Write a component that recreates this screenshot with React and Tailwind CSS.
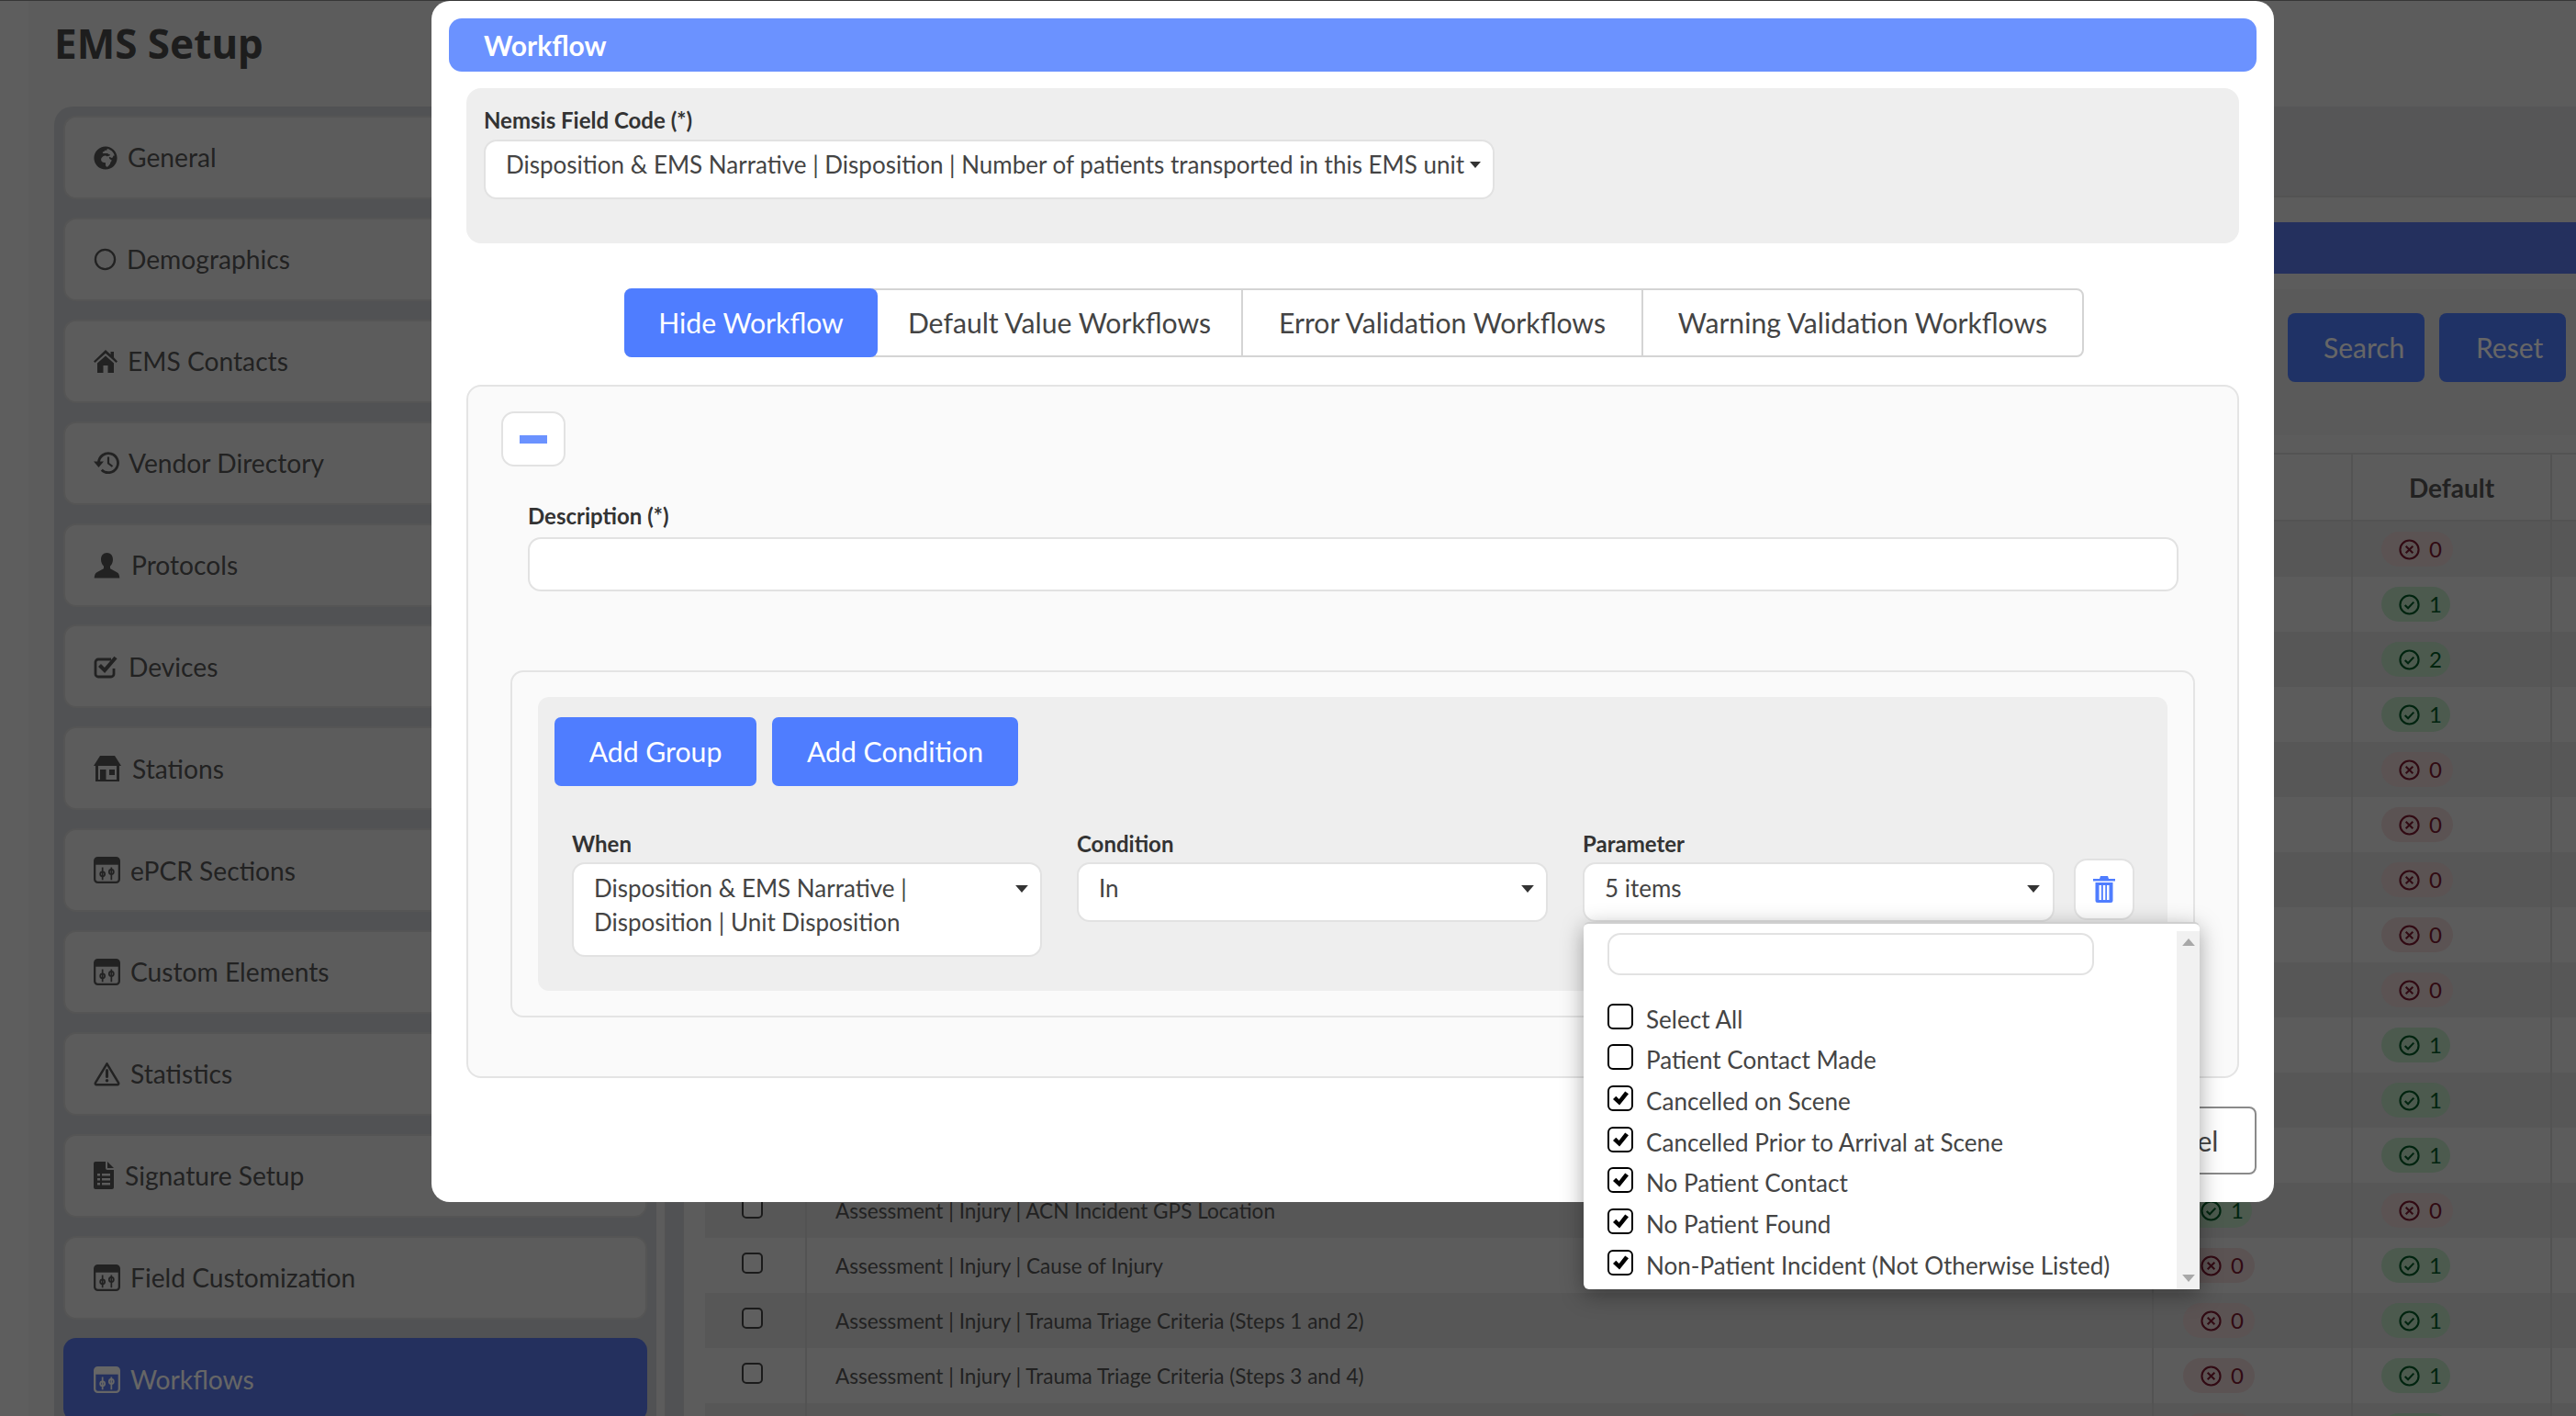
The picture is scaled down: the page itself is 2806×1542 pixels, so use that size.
import React from 'react';
import { FaGlobeAfrica } from 'react-icons/fa';

const HomeIcon = () => (
  <svg viewBox="0 0 26 26" className="w-[26px] h-[26px]" fill="currentColor">
    <path d="M13 1 18.500 6V3H22v6.300L26 13.500l-1.500 1.600L13 4.800 1.500 15.100 0 13.500z" />
    <path d="M4 15.500 13 7.500l9 8V26h-6.500v-8h-5v8H4z" />
  </svg>
);
const HistoryIcon = () => (
  <svg viewBox="0 0 28 26" className="w-[28px] h-[26px]" fill="none" stroke="currentColor">
    <path d="M5.500 12.500a10.500 10.500 0 1 1 3.200 8.200" strokeWidth="2.800" />
    <path d="M0 11.500h11l-5.500 6.500z" fill="currentColor" stroke="none" />
    <path d="M16 6.500v7l4.500 3.500" strokeWidth="2.200" />
  </svg>
);
const CheckSquareIcon = () => (
  <svg viewBox="0 0 27 26" className="w-[27px] h-[26px]" fill="none" stroke="currentColor">
    <path d="M22 15v6a3 3 0 0 1-3 3H5a3 3 0 0 1-3-3V8a3 3 0 0 1 3-3h14" strokeWidth="2.800" />
    <path d="M6.500 11.500 12 17 24 3" strokeWidth="4.200" />
  </svg>
);
const UserIcon = () => (
  <svg viewBox="0 0 29 29" className="w-[29px] h-[29px]" fill="currentColor">
    <path d="M14.5 1c4 0 6.5 3 6.5 7.2 0 3-1.3 5.800-3 7.400v2.100c0 1 6 3 8.500 5.400 1.200 1.200 1.700 3.400 1.800 5.400H.7c.1-2 .6-4.200 1.800-5.400C5 20.700 11 18.700 11 17.700v-2.100C9.300 14 8 11.200 8 8.200 8 4 10.500 1 14.500 1z" />
  </svg>
);
const StationIcon = () => (
  <svg viewBox="0 0 30 30" className="w-[30px] h-[30px]" fill="currentColor">
    <path d="M7 1h16l7 11H0z" />
    <path d="M2 10h3v17h20V10h3v19H2z" />
    <path d="M7 16h6.500v12H7zM17 16h6v6h-6z" />
  </svg>
);
const SlidersIcon = () => (
  <svg viewBox="0 0 30 30" className="w-[29px] h-[29px]" fill="none" stroke="currentColor">
    <rect x="1.200" y="1.200" width="27.600" height="27.600" rx="3.500" strokeWidth="2.400" />
    <path d="M2 2h26v7H2z" fill="currentColor" stroke="none" />
    <path d="M10 12v14M20 12v14" strokeWidth="1.800" />
    <circle cx="10" cy="19.500" r="2.600" strokeWidth="1.800" />
    <circle cx="20" cy="17" r="2.600" strokeWidth="1.800" />
  </svg>
);
const TriangleIcon = () => (
  <svg viewBox="0 0 30 28" className="w-[29px] h-[27px]" fill="none" stroke="currentColor">
    <path d="M15 2.500 28 24a1.500 1.500 0 0 1-1.300 2.300H3.300A1.500 1.500 0 0 1 2 24z" strokeWidth="2.600" strokeLinejoin="round" />
    <path d="M15 10v7" strokeWidth="3.200" strokeLinecap="round" />
    <circle cx="15" cy="21.500" r="1.800" fill="currentColor" stroke="none" />
  </svg>
);
const FileIcon = () => (
  <svg viewBox="0 0 22 30" className="w-[22px] h-[30px]" fill="currentColor">
    <path fillRule="evenodd" d="M2 0h11v7a2 2 0 0 0 2 2h7v19a2 2 0 0 1-2 2H2a2 2 0 0 1-2-2V2a2 2 0 0 1 2-2zM15 0l7 7h-7zM4 13v2.500h3V13zM9 13v2.500h9V13zM4 18v2.500h3V18zM9 18v2.500h9V18zM4 23v2.500h3V23zM9 23v2.500h9V23z" />
  </svg>
);
const CircleIcon = () => (
  <svg viewBox="0 0 26 26" className="w-[25px] h-[25px]" fill="none" stroke="currentColor" strokeWidth="2.400">
    <circle cx="13" cy="13" r="11" />
  </svg>
);
const Caret = ({ className }) => (
  <svg viewBox="0 0 12 7" className={className} fill="currentColor"><path d="M0 0h12L6 7z" /></svg>
);
const Check = () => (
  <svg viewBox="0 0 18 16" className="w-[17px] h-[16px]" fill="#000"><path d="M0 9 3.500 5.500 7 9 14 0 18 3 7.500 16z" /></svg>
);
const Trash = () => (
  <svg viewBox="0 0 24 29" className="w-[24px] h-[29px]" fill="#4f7dff">
    <path d="M8 0h8l1 3h7v2.500H0V3h7z" />
    <path fillRule="evenodd" d="M2.500 7h19v19.500a2.500 2.500 0 0 1-2.500 2.500H5a2.500 2.500 0 0 1-2.500-2.500zM6.500 10v16h2.500V10zM10.800 10v16h2.500V10zM15 10v16h2.500V10z" />
  </svg>
);

const navItems = [
  ['General', <FaGlobeAfrica className="w-[26px] h-[26px]" />, 'gap-[11px]'],
  ['Demographics', <CircleIcon />, 'gap-[11px]'],
  ['EMS Contacts', <HomeIcon />, 'gap-[11px]'],
  ['Vendor Directory', <HistoryIcon />, 'gap-[10px]'],
  ['Protocols', <UserIcon />, 'gap-[12px]'],
  ['Devices', <CheckSquareIcon />, 'gap-[11px]'],
  ['Stations', <StationIcon />, 'gap-[12px]'],
  ['ePCR Sections', <SlidersIcon />, 'gap-[11px]'],
  ['Custom Elements', <SlidersIcon />, 'gap-[11px]'],
  ['Statistics', <TriangleIcon />, 'gap-[11px]'],
  ['Signature Setup', <FileIcon />, 'gap-[12px]'],
  ['Field Customization', <SlidersIcon />, 'gap-[11px]'],
];

const Badge = ({ ok, n }) => (
  <span className={`inline-flex items-center h-[38px] rounded-full pl-[19px] gap-[10px] text-[24px] ${ok ? 'w-[75px] bg-[#bde0c4] text-[#005a26]' : 'w-[78px] bg-[#e4cfcf] text-[#7a1a30]'}`}>
    <svg viewBox="0 0 24 24" className="w-[23px] h-[23px] shrink-0" fill="none" stroke="currentColor" strokeWidth="2.200">
      <circle cx="12" cy="12" r="10.500" />
      {ok ? <path d="m7 12.500 3.500 3.500L17 9" /> : <path d="m8 8 8 8M16 8l-8 8" />}
    </svg>
    {n}
  </span>
);

const rows = [
  ['', 0, 0], ['', 1, 1], ['', 1, 2], ['', 1, 1], ['', 0, 0], ['', 0, 0], ['', 0, 0], ['', 0, 0], ['', 0, 0],
  ['', 0, 1], ['', 0, 1], ['', 0, 1],
  ['Assessment | Injury | ACN Incident GPS Location', 1, 0],
  ['Assessment | Injury | Cause of Injury', 0, 1],
  ['Assessment | Injury | Trauma Triage Criteria (Steps 1 and 2)', 0, 1],
  ['Assessment | Injury | Trauma Triage Criteria (Steps 3 and 4)', 0, 1],
  ['', 0, 1],
];

const options = [
  ['Select All', false],
  ['Patient Contact Made', false],
  ['Cancelled on Scene', true],
  ['Cancelled Prior to Arrival at Scene', true],
  ['No Patient Contact', true],
  ['No Patient Found', true],
  ['Non-Patient Incident (Not Otherwise Listed)', true],
];

const fieldBox = 'bg-white border-2 border-[#e2e2e2] rounded-[14px]';

export default function App() {
  return (
    <div className="relative w-[2806px] h-[1542px] overflow-hidden bg-[#e6e6e6] font-['Lato',sans-serif]">
      {/* page behind the dialog */}
      <div className="h-[1px] bg-[#888]" />
      <div className="flex h-[1541px]">
        <div className="w-[725px] shrink-0 flex flex-col border-r border-[#cfcfcf] border-l-[31px] border-l-[#ebebeb]">
          <div className="h-[115px] shrink-0 pl-[28px] pt-[16px]">
            <h1 className="text-[44px] leading-[60px] font-bold text-[#4a4a4a] font-['Noto_Sans',sans-serif]">EMS Setup</h1>
          </div>
          <div className="ml-[28px] w-[656px] flex-1 bg-[#cbced1] rounded-t-[20px] p-[10px] flex flex-col gap-[19.9px] overflow-hidden">
            {navItems.map(([label, icon, gap]) => (
              <div key={label} className={`h-[91px] shrink-0 flex items-center pl-[31px] ${gap} rounded-[14px] bg-[#e7e7e7] border-2 border-[#d4d4d4] text-[#555] text-[28.2px]`}>
                {icon}
                <span>{label}</span>
              </div>
            ))}
            <div className="h-[91px] shrink-0 flex items-center pl-[33px] gap-[11px] rounded-[14px] bg-[#5a78eb] text-[#fff] text-[28.2px]">
              <SlidersIcon />
              <span>Workflows</span>
            </div>
          </div>
        </div>
        <div className="w-[19px] shrink-0 bg-[#cbced1]" />
        <div className="flex-1 min-w-0 flex flex-col overflow-hidden border-l border-[#d0d0d0]">
          <div className="h-[115px] shrink-0 bg-[#e6e6e6]" />
          <div className="h-[99px] shrink-0 bg-[#d6d8da] border-b-2 border-[#cfcfcf]" />
          <div className="h-[27px] shrink-0" />
          <div className="h-[56px] shrink-0 bg-[#5a78eb]" />
          <div className="h-[17px] shrink-0" />
          <div className="h-[159px] shrink-0 bg-[#e0e0e0] flex items-start justify-end gap-[16px] pr-[11px] pt-[26px]">
            <button className="w-[149px] h-[75px] rounded-[8px] bg-[#4f7dff] text-white text-[30px] pl-[39px] text-left">Search</button>
            <button className="w-[138px] h-[75px] rounded-[8px] bg-[#4f7dff] text-white text-[30px] pl-[40px] text-left">Reset</button>
          </div>
          <div className="h-[19px] shrink-0" />
          <div className="pl-[23px] w-[2085px] text-[#555]">
            <div className="flex h-[75px] border-y-2 border-[#cfcfcf] items-center text-[28px] font-bold">
              <div className="w-[109px] shrink-0" />
              <div className="w-[1467px] shrink-0" />
              <div className="w-[217px] shrink-0 h-full border-l-2 border-[#cfcfcf]" />
              <div className="w-[219px] shrink-0 h-full border-x-2 border-[#cfcfcf] flex items-center justify-center">Default</div>
            </div>
            {rows.map(([name, second, third], i) => (
              <div key={i} className={`flex h-[60px] items-center text-[22.6px] ${i % 2 === 0 ? 'bg-[#d9d9d9]' : 'bg-[#e6e6e6]'}`}>
                <div className="w-[109px] shrink-0 h-full flex items-center pl-[40px]">
                  <span className="w-[23px] h-[23px] rounded-[5px] border-2 border-[#444] bg-[#eee] mb-[5px]" />
                </div>
                <div className="w-[1467px] shrink-0 h-full flex items-center pl-[31px] pt-[1px] border-l-2 border-[#cfcfcf]">{name}</div>
                <div className="w-[217px] shrink-0 h-full flex items-center pl-[32px] border-l-2 border-[#cfcfcf]">
                  {i > 8 && <Badge ok={second === 1} n={second} />}
                </div>
                <div className="w-[219px] shrink-0 h-full flex items-center pl-[31px] border-x-2 border-[#cfcfcf]">
                  <Badge ok={third > 0} n={third} />
                </div>
              </div>
            ))}
          </div>
        </div>
      </div>

      {/* backdrop */}
      <div className="absolute inset-0 bg-black/60" />

      {/* dialog */}
      <div className="absolute left-[470px] top-[1px] w-[2007px] h-[1308px] bg-white rounded-[20px] px-[19px] pt-[19px] text-[#444] text-[26px]">
        <div className="h-[58px] rounded-[14px] bg-[#6b92ff] text-white text-[30px] font-bold leading-[58px] pl-[38px]">Workflow</div>
        <div className="mx-[19px]">
          <div className="mt-[18px] h-[169px] bg-[#eeeeee] rounded-[16px] pl-[19px] pt-[20px]">
            <div className="text-[24px] leading-[30px] font-bold text-[#333]">Nemsis Field Code (*)</div>
            <div className={`mt-[6px] w-[1101px] h-[65px] ${fieldBox} pl-[22px] pt-[7px] flex items-start leading-[36px] whitespace-nowrap`}>
              <span>Disposition &amp; EMS Narrative | Disposition | Number of patients transported in this EMS unit</span>
              <Caret className="w-[12px] h-[7px] ml-[6px] mt-[15px] text-[#333]" />
            </div>
          </div>

          <div className="mt-[49px] h-[75px] flex justify-center ml-[3px] text-[30.2px]">
            <div className="flex border-2 border-[#d4d4d4] rounded-[8px]">
              <div className="w-[276px] -my-[2px] -ml-[2px] rounded-[8px] bg-[#4f7dff] text-white flex items-center justify-center">Hide Workflow</div>
              <div className="w-[396px] flex items-center justify-center">Default Value Workflows</div>
              <div className="w-[436px] border-l-2 border-[#d4d4d4] flex items-center justify-center">Error Validation Workflows</div>
              <div className="w-[480px] border-l-2 border-[#d4d4d4] flex items-center justify-center">Warning Validation Workflows</div>
            </div>
          </div>

          <div className="mt-[30px] h-[755px] bg-[#fafafa] border-2 border-[#e4e4e4] rounded-[16px] pt-[27px]">
            <div className={`ml-[36px] w-[70px] h-[60px] ${fieldBox} flex items-center justify-center`}>
              <span className="w-[30px] h-[9px] bg-[#6b92ff]" />
            </div>
            <div className="ml-[65px] mr-[64px]">
              <div className="mt-[39px] text-[24px] leading-[30px] font-bold text-[#333]">Description (*)</div>
              <div className={`mt-[8px] h-[59px] ${fieldBox}`} />
            </div>
            <div className="mt-[86px] ml-[46px] w-[1835px] h-[378px] border-2 border-[#e4e4e4] rounded-[14px] pt-[27px] pl-[28px]">
              <div className="w-[1775px] h-[320px] bg-[#eeeeee] rounded-[12px] pt-[22px] pl-[18px]">
                <div className="flex gap-[17px] text-white text-[30.2px]">
                  <button className="w-[220px] h-[75px] rounded-[7px] bg-[#4f7dff]">Add Group</button>
                  <button className="w-[268px] h-[75px] rounded-[7px] bg-[#4f7dff]">Add Condition</button>
                </div>
                <div className="flex mt-[47px] pl-[19px] items-start">
                  <div className="w-[512px]">
                    <div className="text-[24px] leading-[32px] font-bold text-[#333]">When</div>
                    <div className={`mt-[4px] h-[103px] ${fieldBox} relative pl-[22px] pr-[60px] pt-[8px] leading-[37px]`}>
                      Disposition &amp; EMS Narrative | Disposition | Unit Disposition
                      <Caret className="absolute right-[13px] top-[23px] w-[14px] h-[8px] text-[#333]" />
                    </div>
                  </div>
                  <div className="w-[513px] ml-[38px]">
                    <div className="text-[24px] leading-[32px] font-bold text-[#333]">Condition</div>
                    <div className={`mt-[4px] h-[65px] ${fieldBox} relative pl-[22px] pt-[8px] leading-[37px]`}>
                      In
                      <Caret className="absolute right-[13px] top-[23px] w-[14px] h-[8px] text-[#333]" />
                    </div>
                  </div>
                  <div className="w-[514px] ml-[38px] relative">
                    <div className="text-[24px] leading-[32px] font-bold text-[#333]">Parameter</div>
                    <div className={`mt-[4px] h-[65px] ${fieldBox} relative pl-[22px] pt-[8px] leading-[37px]`}>
                      5 items
                      <Caret className="absolute right-[14px] top-[23px] w-[14px] h-[8px] text-[#333]" />
                    </div>
                    {/* open dropdown */}
                    <div className="absolute left-[1px] top-[101px] w-[671px] h-[400px] z-10 bg-white border-t-2 border-[#cfcfcf] rounded-[6px] rounded-br-none shadow-[0_6px_24px_rgba(0,0,0,0.35)] flex overflow-hidden">
                      <div className="flex-1 pl-[26px] pt-[10px]">
                        <div className="w-[530px] h-[46px] border-2 border-[#e2e2e2] rounded-[14px]" />
                        <div className="mt-[30.5px]">
                          {options.map(([label, on]) => (
                            <div key={label} className="h-[44.74px] flex items-start gap-[14px] text-[26.1px]">
                              <span className="w-[28px] h-[28px] shrink-0 rounded-[6px] border-2 border-black bg-white flex items-center justify-center">
                                {on && <Check />}
                              </span>
                              <span className="leading-[34px]">{label}</span>
                            </div>
                          ))}
                        </div>
                      </div>
                      <div className="w-[25px] mt-[8px] bg-[#f1f1f1] flex flex-col items-center justify-between py-[8px] text-[#a8a8a8]">
                        <Caret className="w-[14px] h-[8px] rotate-180" />
                        <Caret className="w-[14px] h-[8px]" />
                      </div>
                    </div>
                  </div>
                  <div className={`ml-[21px] mt-[32px] w-[66px] h-[67px] ${fieldBox} flex items-center justify-center`}>
                    <Trash />
                  </div>
                </div>
              </div>
            </div>
          </div>
        </div>
        <div className="mt-[31px] flex justify-end">
          <button className="w-[172px] h-[74px] border-2 border-[#8a8a8a] rounded-[8px] text-[30px]">Cancel</button>
        </div>
      </div>
    </div>
  );
}
